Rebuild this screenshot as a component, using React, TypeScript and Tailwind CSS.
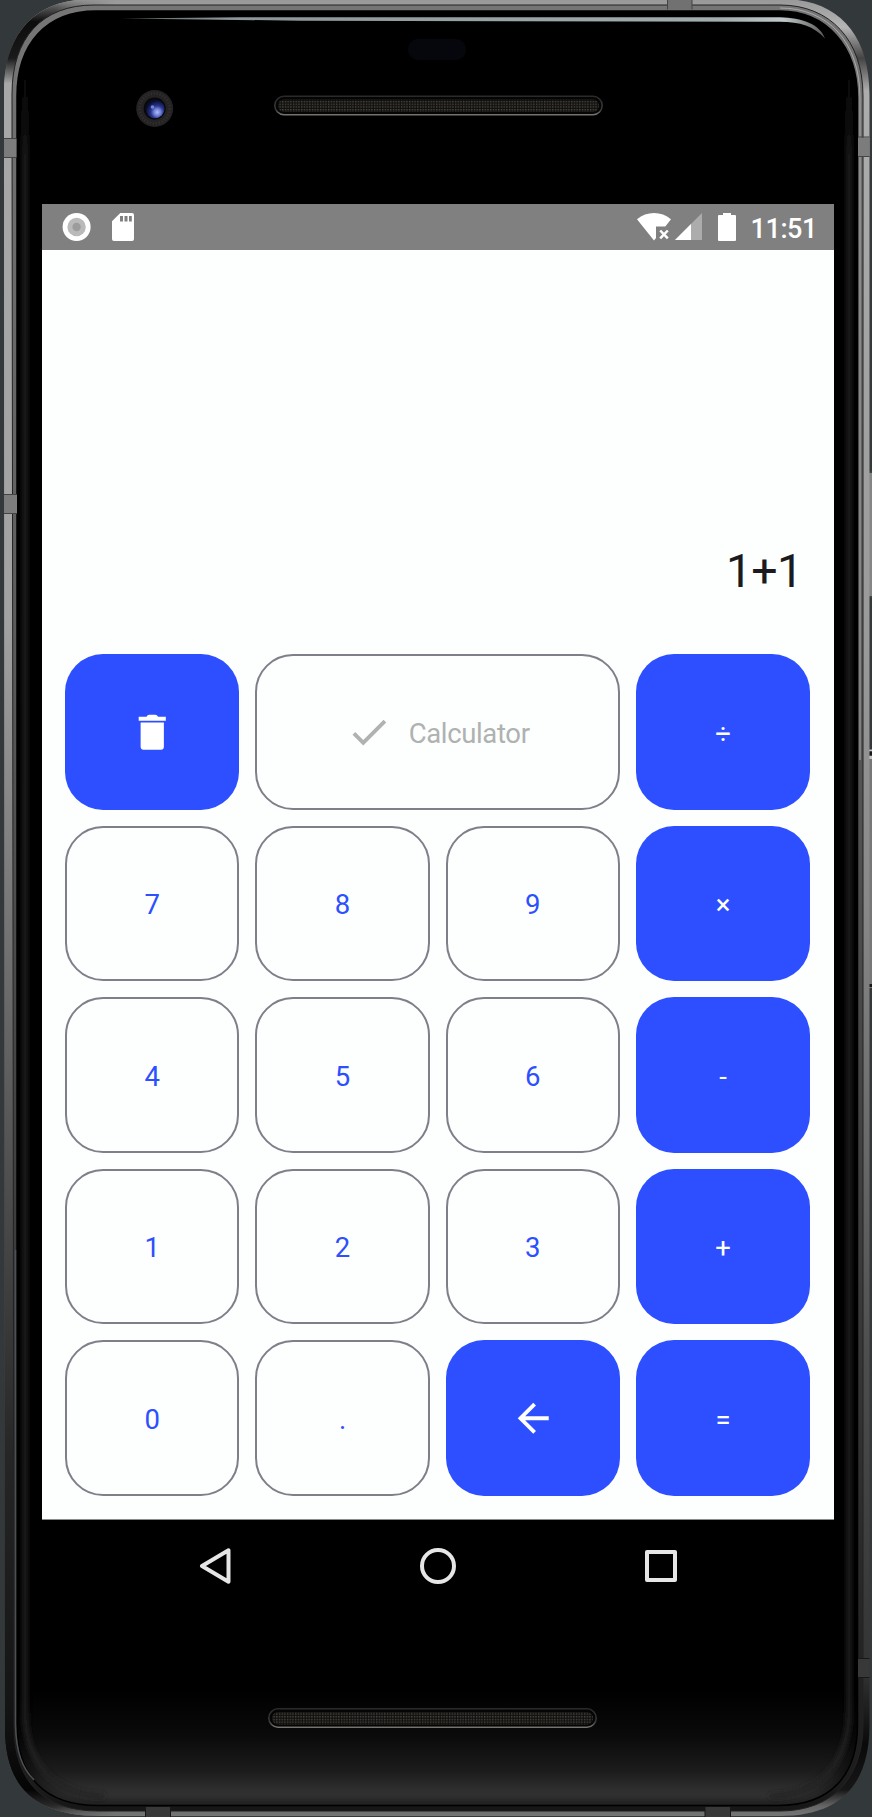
import React from 'react';

type KeyKind = 'filled' | 'outlined' | 'disabled';

interface KeyProps {
  kind: KeyKind;
  label: string;
  children?: React.ReactNode;
}

const kindClasses: Record<KeyKind, string> = {
  filled: 'bg-[#2d4fff] text-white',
  outlined: 'border-2 border-[#7f7f89] text-[#2d4fff]',
  disabled: 'col-span-2 border-2 border-[#7f7f89] text-[#b0b1b1] gap-[17px]',
};

function Key({ kind, label, children }: KeyProps) {
  return (
    <button
      aria-label={label}
      className={`flex items-center justify-center rounded-[38px] text-[27.5px] leading-none pt-[3px] ${kindClasses[kind]}`}
    >
      {children ?? label}
    </button>
  );
}

function TrashIcon() {
  return (
    <svg className="size-[46.5px] -mt-[2px]" viewBox="0 0 24 24" fill="currentColor">
      <path d="M6 19.6c0 .8.6 1.4 1.4 1.4h9.2c.8 0 1.4-.6 1.4-1.4V7H6v12.6zM19 4h-4l-.5-.6c-.3-.3-.5-.4-.9-.4h-3.2c-.4 0-.6.1-.9.4L9 4H5v2h14V4z" />
    </svg>
  );
}

function CheckIcon() {
  return (
    <svg className="size-[46px] -mt-[2px]" viewBox="0 0 24 24" fill="currentColor">
      <path d="M9 16.17 4.83 12l-1.42 1.41L9 19 21 7l-1.41-1.41z" />
    </svg>
  );
}

function BackArrowIcon() {
  return (
    <svg className="size-[46.5px] ml-[1px] -mt-[2px]" viewBox="0 0 24 24" fill="currentColor">
      <path d="M20 11H7.83l5.59-5.59L12 4l-8 8 8 8 1.41-1.41L7.83 13H20v-2z" />
    </svg>
  );
}

function StatusBar() {
  return (
    <header className="flex h-[46px] items-start justify-between bg-[#808080] pl-[20px] pr-[17px] pt-[9px] text-white">
      <div className="flex gap-[21px]">
        <svg className="size-[29px]" viewBox="0 0 29 29">
          <circle cx="14.6" cy="14" r="14" fill="#fff" />
          <circle cx="14.6" cy="14" r="9.2" fill="#bababa" />
          <circle cx="14.6" cy="14" r="4.2" fill="#9c9c9c" />
        </svg>
        <svg className="h-[28px] w-[22px]" viewBox="0 0 22 28">
          <path d="M8.3 0H20q2 0 2 2v24q0 2-2 2H2q-2 0-2-2V8.2z" fill="#fff" />
          <path d="M8 3h3v5.5H8zM12.5 3h3v5.5h-3zM17 3h2.8v5.5H17z" fill="#808080" />
        </svg>
      </div>
      <div className="flex">
        <svg className="h-[28px] w-[34px]" viewBox="0 0 34 28">
          <path d="M0 6.2Q7.500 0 17 0t17 6.200L28.300 13.500H19v11.500L17 27.500z" fill="#fff" />
          <path d="m23.200 17.500 7.600 7.800m0-7.800-7.600 7.800" stroke="#fff" strokeWidth="2.5" />
        </svg>
        <svg className="ml-[4px] h-[28px] w-[27px]" viewBox="0 0 27 28">
          <path d="M0 27 27 0v27z" fill="#acacac" />
          <path d="M0 27 16 11v16z" fill="#fff" />
        </svg>
        <svg className="ml-[16px] h-[28px] w-[18px]" viewBox="0 0 18 28">
          <path d="M5 0h8v2h4q1 0 1 1v24q0 1-1 1H1q-1 0-1-1V3q0-1 1-1h4z" fill="#fff" />
        </svg>
        <span className="ml-[14px] mt-[2px] text-[27px] font-medium leading-[28px] tracking-[-0.4px]">11:51</span>
      </div>
    </header>
  );
}

function NavigationBar() {
  return (
    <nav className="flex h-[92px] items-center justify-between pl-[156px] pr-[156px]">
      <svg className="size-[36px]" viewBox="0 0 36 36" fill="none" stroke="#e6e6e6" strokeWidth="4" strokeLinejoin="round">
        <path d="M30.5 2.3v31.4L4 18z" />
      </svg>
      <svg className="size-[36px]" viewBox="0 0 36 36" fill="none" stroke="#e6e6e6" strokeWidth="4">
        <circle cx="18" cy="18" r="16" />
      </svg>
      <svg className="size-[36px]" viewBox="0 0 36 36" fill="none" stroke="#e6e6e6" strokeWidth="4" strokeLinejoin="round">
        <path d="M5 4h28v28H5z" />
      </svg>
    </nav>
  );
}

const BODY = 'M4 92C4 34 34 -1 92 -1H782C838 -1 869.5 34 869.5 95V1725C869.5 1785 840 1816 780 1816H100C36 1816 5 1788 5 1728Z';
const INNER = 'M12 94C12 38 42 5 94 5H780C830 5 863 40 863 96V1725C863 1778 832 1811 780 1811H98C44 1811 14 1782 14 1726Z';
const GLASS = 'M17 96C17 44 46 11 96 11H780C826 11 857.5 46 857.5 98V1725C857.5 1776 830 1805.5 778 1805.5H98C46 1805.5 17 1778 17 1724Z';

function Speaker({ x, y }: { x: number; y: number }) {
  return (
    <g transform={`translate(${x} ${y})`}>
      <rect x="0.8" y="0.8" width="327.4" height="18.4" rx="9.2" fill="#050505" stroke="url(#speakerRim)" strokeWidth="1.6" />
      <rect x="4" y="4" width="321" height="12.5" rx="6.2" fill="url(#mesh)" />
    </g>
  );
}

function DeviceArt() {
  return (
    <svg className="absolute inset-0 h-full w-full" viewBox="0 0 872 1817" aria-hidden="true">
      <defs>
        <linearGradient id="metalLeft" x1="0" y1="0" x2="0" y2="1817" gradientUnits="userSpaceOnUse">
          <stop offset="0" stopColor="#8a8a8a" />
          <stop offset="0.004" stopColor="#555" />
          <stop offset="0.012" stopColor="#0c0c0c" />
          <stop offset="0.032" stopColor="#1a1a1a" />
          <stop offset="0.046" stopColor="#a8a8a8" />
          <stop offset="0.34" stopColor="#a2a2a2" />
          <stop offset="0.6" stopColor="#5c5c5c" />
          <stop offset="0.8" stopColor="#262626" />
          <stop offset="0.94" stopColor="#141414" />
          <stop offset="0.985" stopColor="#050505" />
          <stop offset="0.994" stopColor="#2a2a2a" />
          <stop offset="1" stopColor="#666" />
        </linearGradient>
        <linearGradient id="metalRight" x1="0" y1="0" x2="0" y2="1817" gradientUnits="userSpaceOnUse">
          <stop offset="0" stopColor="#999" />
          <stop offset="0.015" stopColor="#b5b5b5" />
          <stop offset="0.032" stopColor="#444" />
          <stop offset="0.05" stopColor="#adadad" />
          <stop offset="0.36" stopColor="#999" />
          <stop offset="0.5" stopColor="#888" />
          <stop offset="0.75" stopColor="#4d4d4d" />
          <stop offset="0.92" stopColor="#333" />
          <stop offset="0.96" stopColor="#0a0a0a" />
          <stop offset="0.985" stopColor="#161616" />
          <stop offset="0.994" stopColor="#666" />
          <stop offset="1" stopColor="#777" />
        </linearGradient>
        <linearGradient id="bevel" x1="0" y1="0" x2="0" y2="1817" gradientUnits="userSpaceOnUse">
          <stop offset="0" stopColor="#767676" />
          <stop offset="0.35" stopColor="#5b5b5b" />
          <stop offset="0.75" stopColor="#363636" />
          <stop offset="0.98" stopColor="#1c1c1c" />
          <stop offset="1" stopColor="#151515" />
        </linearGradient>
        <linearGradient id="glassShade" x1="0" y1="1690" x2="0" y2="1806" gradientUnits="userSpaceOnUse">
          <stop offset="0" stopColor="#000" />
          <stop offset="0.4" stopColor="#0a0a0a" />
          <stop offset="0.7" stopColor="#1c1c1c" />
          <stop offset="0.92" stopColor="#353535" />
          <stop offset="1" stopColor="#303030" />
        </linearGradient>
        <linearGradient id="speakerRim" x1="0" y1="0" x2="0" y2="1">
          <stop offset="0" stopColor="#2a2a2a" />
          <stop offset="0.7" stopColor="#383838" />
          <stop offset="1" stopColor="#77736f" />
        </linearGradient>
        <pattern id="mesh" width="2.7" height="2.7" patternUnits="userSpaceOnUse">
          <rect width="2.7" height="2.7" fill="#12110f" />
          <rect width="1.4" height="1.4" fill="#4b4741" />
        </pattern>
        <radialGradient id="lens" cx="0.62" cy="0.68" r="0.62">
          <stop offset="0" stopColor="#b3bdf5" />
          <stop offset="0.28" stopColor="#7482d8" />
          <stop offset="0.55" stopColor="#26358c" />
          <stop offset="1" stopColor="#080b2a" />
        </radialGradient>
        <linearGradient id="glare" x1="120" y1="0" x2="826" y2="0" gradientUnits="userSpaceOnUse">
          <stop offset="0" stopColor="#5b6263" />
          <stop offset="0.15" stopColor="#8b9698" />
          <stop offset="0.85" stopColor="#a2adaf" />
          <stop offset="0.94" stopColor="#c0c8ca" />
          <stop offset="1" stopColor="#555" />
        </linearGradient>
        <linearGradient id="leftFade" x1="55" y1="0" x2="115" y2="0" gradientUnits="userSpaceOnUse">
          <stop offset="0" stopColor="#fff" />
          <stop offset="1" stopColor="#000" />
        </linearGradient>
        <linearGradient id="edgeSheen" x1="0" y1="60" x2="0" y2="160" gradientUnits="userSpaceOnUse">
          <stop offset="0" stopColor="#000" />
          <stop offset="1" stopColor="#222" />
        </linearGradient>
        <mask id="leftMask" maskUnits="userSpaceOnUse" x="0" y="-2" width="872" height="1821">
          <path d="M0-2h872v1821H0z" fill="url(#leftFade)" />
        </mask>
        <clipPath id="glassClip"><path d={GLASS} /></clipPath>
        <filter id="soft" x="-20%" y="-5%" width="140%" height="110%"><feGaussianBlur stdDeviation="2.5" /></filter>
        <filter id="softer" x="-5%" y="-5%" width="110%" height="110%"><feGaussianBlur stdDeviation="5" /></filter>
      </defs>

      <path d="M868 472h4v125h-4z" fill="#858585" />
      <path d="M868 596h4v1.500h-4zM868 471.500h4v1.500h-4z" fill="#444" />
      <path d="M868 750h4v238h-4z" fill="#777" />
      <path d="M868 749.500h4v1.500h-4zM868 756h4v3h-4z" fill="#c4c4c4" />
      <path d="M868 751.500h4v4h-4zM868 984h4v3h-4z" fill="#181818" />

      <path d={BODY} fill="url(#metalRight)" />
      <path d={BODY} fill="url(#metalLeft)" mask="url(#leftMask)" />
      <path d={INNER} fill="url(#bevel)" stroke="#222" strokeWidth="1" />
      <path d={GLASS} fill="url(#glassShade)" />
      <g clipPath="url(#glassClip)">
        <path d={GLASS} fill="none" stroke="#000" strokeWidth="12" filter="url(#softer)" opacity="0.4" />
        <path d="M25 60V1710C25 1762 54 1796 104 1796" fill="none" stroke="url(#edgeSheen)" strokeWidth="5" filter="url(#soft)" />
        <path d="M849 60V1710C849 1762 820 1796 770 1796" fill="none" stroke="url(#edgeSheen)" strokeWidth="5" filter="url(#soft)" />
      </g>
      <path d={GLASS} fill="none" stroke="#000" strokeWidth="1.5" />
      <path d="M15 98C15 42 44 9 96 9H780" fill="none" stroke="#777" strokeWidth="0.8" />
      <path d="M780 8C828 8 860 42 860 98V760" fill="none" stroke="#aaa" strokeWidth="1" />
      <path d="M15.5 1250V1724C16 1752 22 1768 34 1780" fill="none" stroke="#4d5053" strokeWidth="1.5" />

      <path d="M4 139h12.500v18H4zM4 495h13v18H4zM858 137.500h11.500v19H858z" fill="#7c7c7c" />
      <path d="M4 138.500h12.500M4 157.500h12.500M4 494.500h13M4 513.500h13M858 137h11.500M858 156.500h11.500" stroke="#444" strokeWidth="1" />
      <path d="M667.500 0H692V9.500H667.500z" fill="#717171" />
      <path d="M667.500 0v9.500M692 0v9.500" stroke="#444" strokeWidth="1" />
      <path d="M145.500 1807H170.500V1817H145.500zM705 1807H730.500V1817H705zM858 1658.500H869.500V1677.500H858z" fill="#383838" />
      <path d="M145.500 1807v10M170.500 1807v10M705 1807v10M730.500 1807v10M858 1658.500h11.500M858 1677.500h11.500" stroke="#181818" strokeWidth="1" />

      <path d="M122 18.400 240 17.200H780C802 17.800 820 24 825 38.500 814 26 800 21.800 780 21.700L300 20.700Z" fill="url(#glare)" />
      <rect x="408" y="39" width="58" height="21" rx="10" fill="#05070c" />
      <circle cx="154.700" cy="108.500" r="18.500" fill="#242223" />
      <circle cx="154.700" cy="108.500" r="15" fill="none" stroke="#302d2d" strokeWidth="3" strokeDasharray="1.500 1.500" />
      <circle cx="154.700" cy="108.500" r="11" fill="#080808" />
      <circle cx="155" cy="108.800" r="9.500" fill="url(#lens)" />
      <circle cx="152.500" cy="107" r="1.800" fill="#7083e0" />
      <Speaker x={274} y={95.5} />
      <Speaker x={268} y={1708} />
    </svg>
  );
}

export default function App() {
  return (
    <div className="relative h-[1817px] w-[872px] overflow-hidden bg-[#33383b] pl-[42px] pt-[204px] font-['Roboto',sans-serif]">
      <DeviceArt />
      <div className="relative flex w-[792px] flex-col">
        <StatusBar />
        <main className="flex h-[1270px] flex-col border-b border-[#8c8c8c] bg-[#fcfffd]">
          <div className="flex h-[404px] shrink-0 items-end justify-end pb-[56px] pr-[31.5px] text-[46.5px] leading-[54px] tracking-[-0.7px] text-[#1b1b1f]">
            1+1
          </div>
          <div className="grid h-[842px] grid-cols-4 grid-rows-5 gap-4 pl-[23.200px] pr-[23.800px]">
            <Key kind="filled" label="Delete"><TrashIcon /></Key>
            <Key kind="disabled" label="Calculator">
              <CheckIcon />
              <span className="tracking-[-0.35px]">Calculator</span>
            </Key>
            <Key kind="filled" label="÷" />
            <Key kind="outlined" label="7" />
            <Key kind="outlined" label="8" />
            <Key kind="outlined" label="9" />
            <Key kind="filled" label="×" />
            <Key kind="outlined" label="4" />
            <Key kind="outlined" label="5" />
            <Key kind="outlined" label="6" />
            <Key kind="filled" label="-" />
            <Key kind="outlined" label="1" />
            <Key kind="outlined" label="2" />
            <Key kind="outlined" label="3" />
            <Key kind="filled" label="+" />
            <Key kind="outlined" label="0" />
            <Key kind="outlined" label="." />
            <Key kind="filled" label="Backspace"><BackArrowIcon /></Key>
            <Key kind="filled" label="=" />
          </div>
        </main>
        <NavigationBar />
      </div>
    </div>
  );
}
